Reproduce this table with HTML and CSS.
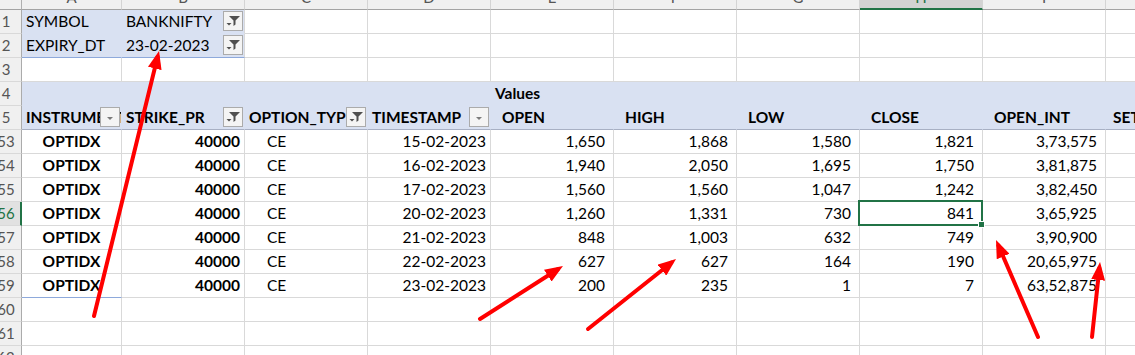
FILE: index.html
```html
<!DOCTYPE html>
<html lang="en">
<head>
  <meta charset="UTF-8">
  <title>BANKNIFTY pivot</title>
  <link rel="stylesheet" href="styles.css">
</head>
<body>
<div class="wrap">
  <div class="sheet">
    <!-- column letters -->
    <div class="ch corner"></div>
    <div class="ch"><span>A</span></div>
    <div class="ch"><span>B</span></div>
    <div class="ch"><span>C</span></div>
    <div class="ch"><span>D</span></div>
    <div class="ch"><span>E</span></div>
    <div class="ch"><span>F</span></div>
    <div class="ch"><span>G</span></div>
    <div class="ch sel"><span>H</span></div>
    <div class="ch"><span>I</span></div>
    <div class="ch"><span>J</span></div>

    <!-- report filters -->
    <div class="rh"><span>1</span></div>
    <div class="c pv">SYMBOL</div>
    <div class="c pv edge">BANKNIFTY
      <span class="btn"><svg width="18" height="18" viewBox="0 0 18 18"><path d="M5 4H16L11.5 8.5V12.5L9.5 14V8.5Z" fill="#4f4f4f"/><path d="M2.5 11H7.5L5 13.5Z" fill="#4f4f4f"/></svg></span>
    </div>
    <div class="c"></div><div class="c"></div><div class="c"></div><div class="c"></div><div class="c"></div><div class="c"></div><div class="c"></div><div class="c"></div>

    <div class="rh"><span>2</span></div>
    <div class="c pv pv-end">EXPIRY_DT</div>
    <div class="c pv pv-end edge">23-02-2023
      <span class="btn"><svg width="18" height="18" viewBox="0 0 18 18"><path d="M5 4H16L11.5 8.5V12.5L9.5 14V8.5Z" fill="#4f4f4f"/><path d="M2.5 11H7.5L5 13.5Z" fill="#4f4f4f"/></svg></span>
    </div>
    <div class="c"></div><div class="c"></div><div class="c"></div><div class="c"></div><div class="c"></div><div class="c"></div><div class="c"></div><div class="c"></div>

    <div class="rh"><span>3</span></div>
    <div class="c"></div><div class="c"></div><div class="c"></div><div class="c"></div><div class="c"></div><div class="c"></div><div class="c"></div><div class="c"></div><div class="c"></div><div class="c"></div>

    <!-- pivot header -->
    <div class="rh"><span>4</span></div>
    <div class="c pv"></div><div class="c pv"></div><div class="c pv"></div><div class="c pv"></div>
    <div class="c pv b">Values</div>
    <div class="c pv"></div><div class="c pv"></div><div class="c pv"></div><div class="c pv"></div><div class="c pv"></div>

    <div class="rh"><span>5</span></div>
    <div class="c pv hd b">INSTRUMENT
      <span class="btn"><svg width="18" height="18" viewBox="0 0 18 18"><path d="M6 9H12L9 12Z" fill="#7a7a7a"/></svg></span>
    </div>
    <div class="c pv hd b">STRIKE_PR
      <span class="btn"><svg width="18" height="18" viewBox="0 0 18 18"><path d="M5 4H16L11.5 8.5V12.5L9.5 14V8.5Z" fill="#4f4f4f"/><path d="M2.5 11H7.5L5 13.5Z" fill="#4f4f4f"/></svg></span>
    </div>
    <div class="c pv hd b">OPTION_TYP
      <span class="btn"><svg width="18" height="18" viewBox="0 0 18 18"><path d="M5 4H16L11.5 8.5V12.5L9.5 14V8.5Z" fill="#4f4f4f"/><path d="M2.5 11H7.5L5 13.5Z" fill="#4f4f4f"/></svg></span>
    </div>
    <div class="c pv hd b">TIMESTAMP
      <span class="btn"><svg width="18" height="18" viewBox="0 0 18 18"><path d="M6 9H12L9 12Z" fill="#7a7a7a"/></svg></span>
    </div>
    <div class="c pv hd b ind">OPEN</div>
    <div class="c pv hd b ind">HIGH</div>
    <div class="c pv hd b ind">LOW</div>
    <div class="c pv hd b ind">CLOSE</div>
    <div class="c pv hd b ind">OPEN_INT</div>
    <div class="c pv hd b set">SETTLE_PR</div>

    <!-- data rows -->
    <div class="rh"><span>53</span></div>
    <div class="c b ctr">OPTIDX</div><div class="c b r">40000</div><div class="c ce">CE</div><div class="c r">15-02-2023</div>
    <div class="c num">1,650</div><div class="c num">1,868</div><div class="c num">1,580</div><div class="c num">1,821</div><div class="c num">3,73,575</div><div class="c"></div>

    <div class="rh"><span>54</span></div>
    <div class="c b ctr">OPTIDX</div><div class="c b r">40000</div><div class="c ce">CE</div><div class="c r">16-02-2023</div>
    <div class="c num">1,940</div><div class="c num">2,050</div><div class="c num">1,695</div><div class="c num">1,750</div><div class="c num">3,81,875</div><div class="c"></div>

    <div class="rh"><span>55</span></div>
    <div class="c b ctr">OPTIDX</div><div class="c b r">40000</div><div class="c ce">CE</div><div class="c r">17-02-2023</div>
    <div class="c num">1,560</div><div class="c num">1,560</div><div class="c num">1,047</div><div class="c num">1,242</div><div class="c num">3,82,450</div><div class="c"></div>

    <div class="rh cur"><span>56</span></div>
    <div class="c b ctr">OPTIDX</div><div class="c b r">40000</div><div class="c ce">CE</div><div class="c r">20-02-2023</div>
    <div class="c num">1,260</div><div class="c num">1,331</div><div class="c num">730</div><div class="c num active">841<i class="handle"></i></div><div class="c num">3,65,925</div><div class="c"></div>

    <div class="rh"><span>57</span></div>
    <div class="c b ctr">OPTIDX</div><div class="c b r">40000</div><div class="c ce">CE</div><div class="c r">21-02-2023</div>
    <div class="c num">848</div><div class="c num">1,003</div><div class="c num">632</div><div class="c num">749</div><div class="c num">3,90,900</div><div class="c"></div>

    <div class="rh"><span>58</span></div>
    <div class="c b ctr">OPTIDX</div><div class="c b r">40000</div><div class="c ce">CE</div><div class="c r">22-02-2023</div>
    <div class="c num">627</div><div class="c num">627</div><div class="c num">164</div><div class="c num">190</div><div class="c num">20,65,975</div><div class="c"></div>

    <div class="rh"><span>59</span></div>
    <div class="c b ctr pv-line">OPTIDX</div><div class="c b r">40000</div><div class="c ce">CE</div><div class="c r">23-02-2023</div>
    <div class="c num">200</div><div class="c num">235</div><div class="c num">1</div><div class="c num">7</div><div class="c num">63,52,875</div><div class="c"></div>

    <!-- empty rows -->
    <div class="rh"><span>60</span></div>
    <div class="c"></div><div class="c"></div><div class="c"></div><div class="c"></div><div class="c"></div><div class="c"></div><div class="c"></div><div class="c"></div><div class="c"></div><div class="c"></div>
    <div class="rh"><span>61</span></div>
    <div class="c"></div><div class="c"></div><div class="c"></div><div class="c"></div><div class="c"></div><div class="c"></div><div class="c"></div><div class="c"></div><div class="c"></div><div class="c"></div>
    <div class="rh"><span>62</span></div>
    <div class="c"></div><div class="c"></div><div class="c"></div><div class="c"></div><div class="c"></div><div class="c"></div><div class="c"></div><div class="c"></div><div class="c"></div><div class="c"></div>
  </div>

  <!-- red annotation arrows drawn over the sheet -->
  <svg class="marks" width="1135" height="355" viewBox="0 0 1135 355">
    <defs>
      <marker id="head" markerUnits="userSpaceOnUse" markerWidth="18" markerHeight="14" refX="12" refY="7" orient="auto">
        <path d="M0 0L18 7L0 14Z" fill="#ff0000"/>
      </marker>
    </defs>
    <g stroke="#ff0000" stroke-width="4" stroke-linecap="round" marker-end="url(#head)">
      <line x1="94" y1="316" x2="157.6" y2="56.8"/>
      <line x1="480" y1="319" x2="557.9" y2="269.2"/>
      <line x1="588" y1="329" x2="671.3" y2="262.7"/>
      <line x1="1038" y1="337" x2="998.4" y2="245.5"/>
      <line x1="1092" y1="337" x2="1099.4" y2="268"/>
    </g>
  </svg>
</div>
</body>
</html>
```

FILE: styles.css
```css
html, body {
  margin: 0; padding: 0;
  background: #fff;
  overflow: hidden;
  font-family: Lato, "Liberation Sans", sans-serif;
  font-size: 15.5px;
  color: #000;
}

.wrap { position: relative; }

/* the grid of cells */
.sheet {
  display: grid;
  grid-template-columns: 22px 100px repeat(9, 123px);
  grid-template-rows: 10px;
  grid-auto-rows: 24px;
  width: max-content;
}

/* column letters, only their feet show */
.ch {
  box-sizing: border-box;
  background: #f0f0f0;
  border-right: 1px solid #d4d4d4;
  border-bottom: 1px solid #a3a3a3;
  overflow: hidden;
  text-align: center;
  color: #555;
  font-size: 15px;
}
.ch span { display: block; line-height: 15px; margin-top: -10px; }
.ch.corner { border-right-color: #b0b0b0; }
.ch.sel {
  background: #d3d3d3;
  border-bottom: 2px solid #217346;
  color: #217346;
}

/* row numbers, partly scrolled off the left edge */
.rh {
  box-sizing: border-box;
  background: #f0f0f0;
  border-right: 1px solid #ababab;
  border-bottom: 1px solid #d9d9d9;
  overflow: hidden;
  color: #555;
  font-size: 15px;
  line-height: 23px;
}
.rh span { display: block; width: 32px; margin-left: -10px; text-align: center; }
.rh.cur {
  background: #e1e1e1;
  color: #217346;
  border-right: 2px solid #217346;
}

.c {
  box-sizing: border-box;
  position: relative;
  border-right: 1px solid #d9d9d9;
  border-bottom: 1px solid #d9d9d9;
  padding: 0 4px;
  line-height: 23px;
  white-space: nowrap;
  overflow: hidden;
}

/* pivot table fill */
.pv { background: #d9e1f2; border-color: transparent; }
.pv.edge { border-right-color: #d9d9d9; }
.pv-end { border-bottom-color: #8ea9db; }
.pv-line { border-bottom-color: #8ea9db; }
.hd { border-bottom-color: #a8b0c4; }

.b { font-weight: bold; }
.r { text-align: right; }
.ctr { text-align: center; }
.ce { padding-left: 22px; }
.ind { padding-left: 11px; }
.set { padding-left: 7px; }
.num { text-align: right; padding-right: 8px; }

/* filter / dropdown buttons */
.btn {
  position: absolute;
  top: 1px; right: 1px;
  width: 20px; height: 20px;
  box-sizing: border-box;
  border: 1px solid #ababab;
  background: #f4f4f4;
  display: flex;
}

/* active cell */
.active { overflow: visible; }
.active::after {
  content: "";
  position: absolute;
  top: -2px; left: -2px; right: -1px; bottom: -1px;
  border: 2px solid #217346;
}
.handle {
  position: absolute;
  right: -3px; bottom: -3px;
  width: 5px; height: 5px;
  background: #217346;
  border: 1px solid #fff;
  z-index: 1;
}

.marks {
  position: absolute;
  left: 0; top: 0;
  pointer-events: none;
}
```
